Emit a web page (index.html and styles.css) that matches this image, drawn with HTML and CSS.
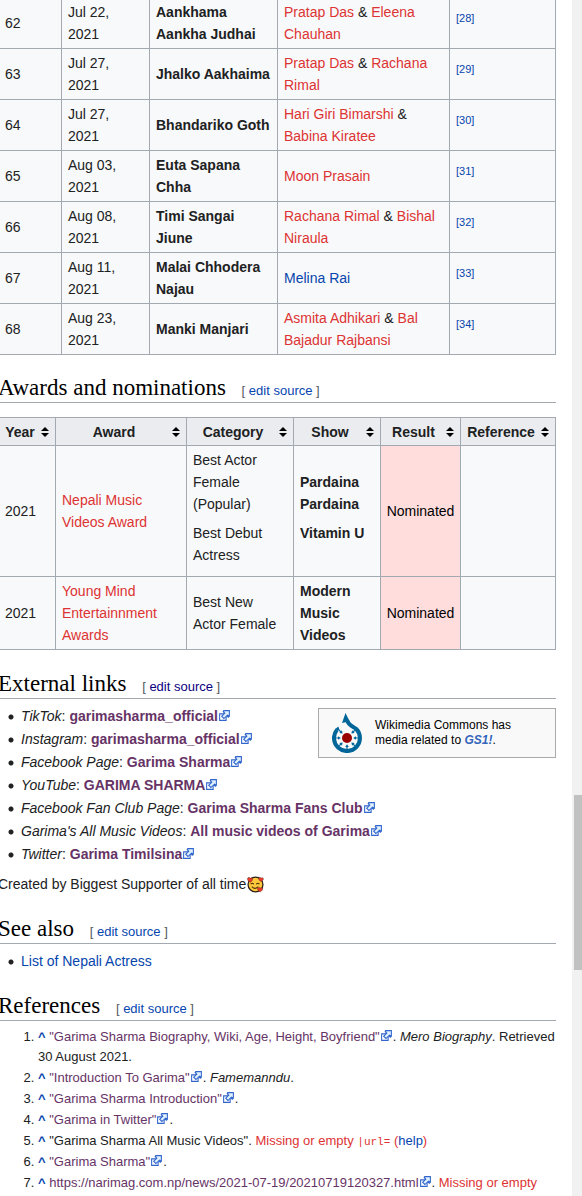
FILE: index.html
```html
<!DOCTYPE html>
<html lang="en">
<head>
<meta charset="utf-8">
<title>Garima Sharma</title>
<link rel="stylesheet" href="styles.css">
</head>
<body>
<svg class="sprite" aria-hidden="true">
  <symbol id="ext" viewBox="0 0 12 12">
    <path fill="#fff" stroke="#36c" d="M1.5 4.5h6v6h-6z"/>
    <path fill="#36c" d="M5 1H11v6L9.427 8.200l-1.310-1.310L5.393 9.350l-2.690-2.688 2.810-2.808L4.200 2.544z"/>
    <path fill="#dff1ff" d="M6.500 2H10v3.800L8.700 5 5.600 8 4.090 6.723l2.882-2.880-1.500-1.500z"/>
  </symbol>
  <symbol id="sort" viewBox="0 0 8 10"><path d="M0 4l4-4 4 4zM0 6h8l-4 4z"/></symbol>
</svg>
<main class="content">
  <table class="wikitable songs">
    <colgroup><col class="w-no"><col class="w-date"><col class="w-song"><col class="w-artist"><col></colgroup>
    <tbody>
      <tr><td>62</td><td>Jul 22, 2021</td><td><b>Aankhama Aankha Judhai</b></td><td><a class="new" href="#">Pratap Das</a> &amp; <a class="new" href="#">Eleena Chauhan</a></td><td><sup><a href="#">[28]</a></sup></td></tr>
      <tr><td>63</td><td>Jul 27, 2021</td><td><b>Jhalko Aakhaima</b></td><td><a class="new" href="#">Pratap Das</a> &amp; <a class="new" href="#">Rachana Rimal</a></td><td><sup><a href="#">[29]</a></sup></td></tr>
      <tr><td>64</td><td>Jul 27, 2021</td><td><b>Bhandariko Goth</b></td><td><a class="new" href="#">Hari Giri Bimarshi</a> &amp; <a class="new" href="#">Babina Kiratee</a></td><td><sup><a href="#">[30]</a></sup></td></tr>
      <tr><td>65</td><td>Aug 03, 2021</td><td><b>Euta Sapana Chha</b></td><td><a class="new" href="#">Moon Prasain</a></td><td><sup><a href="#">[31]</a></sup></td></tr>
      <tr><td>66</td><td>Aug 08, 2021</td><td><b>Timi Sangai Jiune</b></td><td><a class="new" href="#">Rachana Rimal</a> &amp; <a class="new" href="#">Bishal Niraula</a></td><td><sup><a href="#">[32]</a></sup></td></tr>
      <tr><td>67</td><td>Aug 11, 2021</td><td><b>Malai Chhodera Najau</b></td><td><a href="#">Melina Rai</a></td><td><sup><a href="#">[33]</a></sup></td></tr>
      <tr><td>68</td><td>Aug 23, 2021</td><td><b>Manki Manjari</b></td><td><a class="new" href="#">Asmita Adhikari</a> &amp; <a class="new" href="#">Bal Bajadur Rajbansi</a></td><td><sup><a href="#">[34]</a></sup></td></tr>
    </tbody>
  </table>

  <h2>Awards and nominations <span class="edit">[ <a href="#">edit source</a> ]</span></h2>
  <table class="wikitable awards">
    <colgroup><col class="w-year"><col class="w-award"><col class="w-category"><col class="w-show"><col class="w-result"><col></colgroup>
    <thead>
      <tr>
        <th><button type="button"><span>Year</span><svg class="sort"><use href="#sort"/></svg></button></th>
        <th><button type="button"><span>Award</span><svg class="sort"><use href="#sort"/></svg></button></th>
        <th><button type="button"><span>Category</span><svg class="sort"><use href="#sort"/></svg></button></th>
        <th><button type="button"><span>Show</span><svg class="sort"><use href="#sort"/></svg></button></th>
        <th><button type="button"><span>Result</span><svg class="sort"><use href="#sort"/></svg></button></th>
        <th><button type="button"><span>Reference</span><svg class="sort"><use href="#sort"/></svg></button></th>
      </tr>
    </thead>
    <tbody>
      <tr><td>2021</td><td><a class="new" href="#">Nepali Music Videos Award</a></td><td>Best Actor Female (Popular)<p>Best Debut Actress</p></td><td><b>Pardaina Pardaina</b><p><b>Vitamin U</b></p></td><td class="nominated">Nominated</td><td></td></tr>
      <tr><td>2021</td><td><a class="new" href="#">Young Mind Entertainnment Awards</a></td><td>Best New Actor Female</td><td><b>Modern Music Videos</b></td><td class="nominated">Nominated</td><td></td></tr>
    </tbody>
  </table>

  <h2>External links <span class="edit seen">[ <a href="#">edit source</a> ]</span></h2>
  <aside class="commons">
    <svg class="commons-logo" viewBox="0 0 30 40" aria-hidden="true">
      <path fill="none" stroke="#069" stroke-width="4" d="M5 16.700A13 13 0 1 0 24.300 16C22 13.800 16.500 13 15 7"/>
      <path fill="#069" d="M13.500 0l5 10-4-1-4.500 1zM3 16.200L6.300 13.500 8 18z"/>
      <circle cx="15" cy="25" r="5" fill="#900"/>
      <g fill="#069">
        <path id="ray" d="M14.400 36h1.200v-2h1.200L15 31.200 13.200 34h1.200z"/>
        <use href="#ray" transform="rotate(45 15 25)"/>
        <use href="#ray" transform="rotate(90 15 25)"/>
        <use href="#ray" transform="rotate(135 15 25)"/>
        <use href="#ray" transform="rotate(225 15 25)"/>
        <use href="#ray" transform="rotate(270 15 25)"/>
        <use href="#ray" transform="rotate(315 15 25)"/>
      </g>
    </svg>
    <div>Wikimedia Commons has media related to <a href="#">GS1!</a>.</div>
  </aside>
  <ul>
    <li><i>TikTok</i>: <a class="ext" href="#"><b>garimasharma_official</b><svg><use href="#ext"/></svg></a></li>
    <li><i>Instagram</i>: <a class="ext" href="#"><b>garimasharma_official</b><svg><use href="#ext"/></svg></a></li>
    <li><i>Facebook Page</i>: <a class="ext" href="#"><b>Garima Sharma</b><svg><use href="#ext"/></svg></a></li>
    <li><i>YouTube</i>: <a class="ext" href="#"><b>GARIMA SHARMA</b><svg><use href="#ext"/></svg></a></li>
    <li><i>Facebook Fan Club Page</i>: <a class="ext" href="#"><b>Garima Sharma Fans Club</b><svg><use href="#ext"/></svg></a></li>
    <li><i>Garima's All Music Videos</i>: <a class="ext" href="#"><b>All music videos of Garima</b><svg><use href="#ext"/></svg></a></li>
    <li><i>Twitter</i>: <a class="ext" href="#"><b>Garima Timilsina</b><svg><use href="#ext"/></svg></a></li>
  </ul>
  <p class="credit">Created by Biggest Supporter of all time<svg class="emoji" viewBox="0 0 16 16" role="img" aria-label="Smiling face with hearts">
    <circle cx="8" cy="8" r="7" fill="#ffc83d" stroke="#2b2118" stroke-width="1.200"/>
    <path fill="none" stroke="#4a2c0a" stroke-linecap="round" d="M3.800 7.500q1.200-1.400 2.400 0M9 7.500q1.200-1.400 2.400 0M4.800 10.300q2.700 2.700 5.400 0"/>
    <path fill="#e8392b" stroke="#2b2118" stroke-width=".3" d="M3 6C1 4.800 0 3.500.5 2.200 1.200.8 2.700 1 3 2.200c1-1 2.600-.4 2.300 1C5.100 4.500 4 5.300 3 6zM13.200 5.200C11.500 4.500 10.500 3 11 1.900c.6-1 1.900-.8 2.200.2.800-1 2.400-.6 2.300.8-.1 1.100-1.300 1.800-2.300 2.300zM12.300 15c-1.900-1-2.900-2.500-2.400-3.700.6-1.100 2-1 2.400.2.800-1.100 2.600-.7 2.500.8-.1 1.200-1.400 2.100-2.500 2.700z"/>
  </svg></p>

  <h2>See also <span class="edit">[ <a href="#">edit source</a> ]</span></h2>
  <ul>
    <li><a href="#">List of Nepali Actress</a></li>
  </ul>

  <h2>References <span class="edit">[ <a href="#">edit source</a> ]</span></h2>
  <ol class="references">
    <li><a class="up" href="#">^</a> <a class="ext" href="#">"Garima Sharma Biography, Wiki, Age, Height, Boyfriend"<svg><use href="#ext"/></svg></a>. <i>Mero Biography</i>. Retrieved 30 August 2021.</li>
    <li><a class="up" href="#">^</a> <a class="ext" href="#">"Introduction To Garima"<svg><use href="#ext"/></svg></a>. <i>Famemanndu</i>.</li>
    <li><a class="up" href="#">^</a> <a class="ext" href="#">"Garima Sharma Introduction"<svg><use href="#ext"/></svg></a>.</li>
    <li><a class="up" href="#">^</a> <a class="ext" href="#">"Garima in Twitter"<svg><use href="#ext"/></svg></a>.</li>
    <li><a class="up" href="#">^</a> "Garima Sharma All Music Videos". <span class="error">Missing or empty <code>|url=</code> (<a href="#">help</a>)</span></li>
    <li><a class="up" href="#">^</a> <a class="ext" href="#">"Garima Sharma"<svg><use href="#ext"/></svg></a>.</li>
    <li><a class="up" href="#">^</a> <a class="ext" href="#">https://narimag.com.np/news/2021-07-19/20210719120327.html<svg><use href="#ext"/></svg></a>. <span class="error">Missing or empty</span></li>
  </ol>
</main>
<div class="scrollbar"><div class="thumb"></div></div>
</body>
</html>
```
FILE: styles.css
```css
* { box-sizing: border-box; }
body {
  display: flex;
  gap: 16px;
  height: 100vh;
  margin: 0;
  overflow: hidden;
  background: #fff;
  color: #202122;
  font: 14px/22px "Liberation Sans", Arial, sans-serif;
}
.sprite { position: absolute; width: 0; height: 0; }
.content { flex: 1; min-width: 0; margin: -2px 0 0 -2px; }
a { color: #0645ad; text-decoration: none; }
a.new, .error { color: #d33; }
a.ext { color: #636; }
.ext svg { width: 13px; height: 13px; vertical-align: -1px; }
p { margin: 7px 0; }

.wikitable {
  width: 100%;
  table-layout: fixed;
  border-collapse: collapse;
  background: #f8f9fa;
}
.wikitable td, .wikitable th { padding: 3px 6px; border: 1px solid #a2a9b1; }
.wikitable th { padding-bottom: 2px; background: #eaecf0; }
.songs tr:first-child td { border-top: 0; }
.w-no { width: 63px; }
.w-date { width: 88px; }
.w-song { width: 128px; }
.w-artist { width: 172px; }
.w-year { width: 57px; }
.w-award { width: 131px; }
.w-category { width: 107px; }
.w-show { width: 87px; }
.w-result { width: 80px; }
.nominated { background: #fdd; color: #000; text-align: center; white-space: nowrap; }
td.nominated { padding-left: 0; padding-right: 0; }
sup { font-size: 11px; line-height: 1; vertical-align: super; }
th button {
  display: flex;
  align-items: center;
  gap: 6px;
  width: 100%;
  padding: 0;
  border: 0;
  background: none;
  color: inherit;
  font: inherit;
  white-space: nowrap;
}
th span { flex: 1; text-align: center; }
.sort { flex: none; width: 8px; height: 10px; }

h2 {
  margin: 20px 0 0;
  border-bottom: 1px solid #a2a9b1;
  color: #000;
  font: 23px/28px "Liberation Serif", Georgia, serif;
}
.songs + h2 { margin-top: 19px; }
.edit {
  margin-left: 10px;
  color: #54595d;
  font: 13px/14px "Liberation Sans", Arial, sans-serif;
}
.seen a { color: #0b0080; }
.awards { margin-top: 14px; }

ul { margin: 6px 0 0; padding-left: 10px; list-style: none; }
li { margin-bottom: 1px; }
ul li {
  padding-left: 13px;
  background: radial-gradient(circle at 3px 12px, #202122 2px, transparent 3px);
}
.commons {
  display: flex;
  float: right;
  align-items: center;
  gap: 13px;
  width: 238px;
  margin-top: 9px;
  padding: 4px 12px 4px 13px;
  border: 1px solid #aaa;
  background: #f9f9f9;
  color: #000;
  font-size: 12px;
  line-height: 15px;
}
.commons a { color: #36b; font-weight: bold; font-style: italic; }
.commons-logo { flex: none; width: 30px; height: 40px; }
.credit { margin-top: 8px; }
.emoji { width: 17px; height: 17px; margin-left: 1px; vertical-align: -4px; }

.references {
  margin: 6px 0 0;
  padding-left: 40px;
  font-size: 13px;
  line-height: 20px;
}
.up { font-weight: bold; }
code { font: 11px "Liberation Mono", monospace; }

.scrollbar { flex: none; width: 10px; padding: 795px 0 0 2px; background: #f1f1f1; }
.thumb { height: 175px; background: #c1c1c1; }
```
